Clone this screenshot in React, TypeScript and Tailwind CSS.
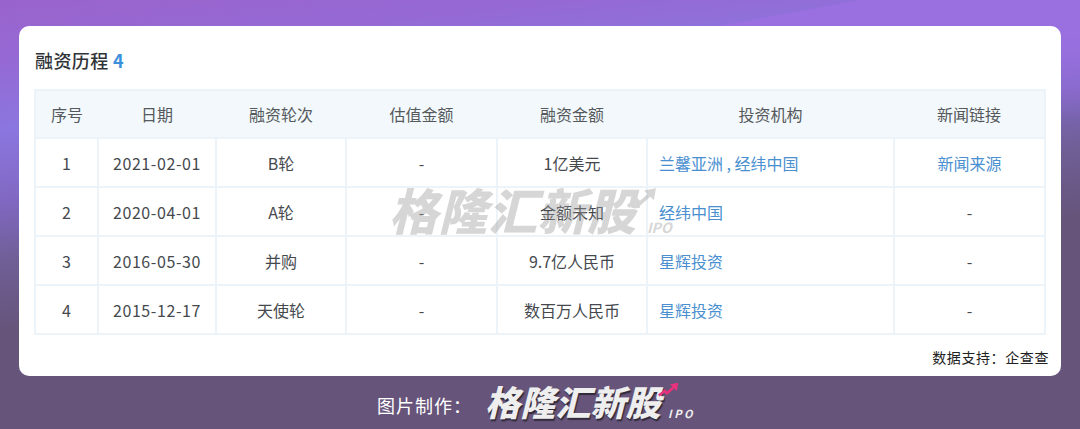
import React from "react";

const rows = [
  { id: "1", date: "2021-02-01", round: "B轮", value: "-", amount: "1亿美元", investors: "兰馨亚洲 , 经纬中国", news: "新闻来源" },
  { id: "2", date: "2020-04-01", round: "A轮", value: "-", amount: "金额未知", investors: "经纬中国", news: "-" },
  { id: "3", date: "2016-05-30", round: "并购", value: "-", amount: "9.7亿人民币", investors: "星辉投资", news: "-" },
  { id: "4", date: "2015-12-17", round: "天使轮", value: "-", amount: "数百万人民币", investors: "星辉投资", news: "-" },
];

const headers = ["序号", "日期", "融资轮次", "估值金额", "融资金额", "投资机构", "新闻链接"];
const widths = ["w-[63px]", "w-[118px]", "w-[130px]", "w-[151px]", "w-[150px]", "w-[247px]", "w-[151px]"];

function Arrow({ className }: { className: string }) {
  return (
    <svg viewBox="0 0 28 20" className={className}>
      <path d="M1 18 L9 12 L12 15 L21 7" fill="none" stroke="currentColor" strokeWidth="3.5" />
      <path d="M16 3 L27 1 L25 12 Z" fill="currentColor" />
    </svg>
  );
}

export default function App() {
  return (
    <div className="relative h-[429px] w-[1080px] overflow-hidden bg-[linear-gradient(174deg,#9a63cc_0px,#9569d4_60px,#8b76df_130px,#8068c2_200px,#6f5f96_260px,#66547a_330px)] font-['Noto_Sans_CJK_SC',sans-serif]">
      {/* lighter wedge in the top right of the backdrop */}
      <svg viewBox="0 0 1080 120" className="absolute top-0 left-0 h-[120px] w-[1080px]">
        <defs>
          <linearGradient id="wedge" x1="0" y1="0" x2="0" y2="1">
            <stop offset="0" stopColor="#9a6fe0" />
            <stop offset="0.3" stopColor="#9a6fe0" />
            <stop offset="1" stopColor="#9a6fe0" stopOpacity="0" />
          </linearGradient>
        </defs>
        <polygon points="600,48 860,0 1080,0 1080,120 600,120" fill="url(#wedge)" />
      </svg>

      <div className="relative px-[19px] pt-[26px]">
        <div className="relative h-[350px] rounded-[10px] bg-white px-4 pt-[19px]">
          <h2 className="h-[44px] text-[18px] leading-[30px] font-medium tracking-[0.4px] text-[#2f3338]">
            融资历程 <span className="font-bold text-[#3c8fdc]">4</span>
          </h2>

          <table className="-ml-px w-[1010px] table-fixed border-collapse text-[16px] text-[#45494e]">
            <thead>
              <tr className="h-[48px] bg-[#f2f8fb]">
                {headers.map((h, i) => (
                  <th key={h} className={`${widths[i]} border-y-2 border-[#ecf4f9] font-normal text-[#55585c] first:border-l-2 last:border-r-2`}>
                    {h}
                  </th>
                ))}
              </tr>
            </thead>
            <tbody>
              {rows.map((r) => (
                <tr key={r.id} className="h-[49px] text-center">
                  <td className="border-2 border-[#ecf4f9]">{r.id}</td>
                  <td className="border-2 border-[#ecf4f9] tracking-[0.6px]">{r.date}</td>
                  <td className="border-2 border-[#ecf4f9]">{r.round}</td>
                  <td className="border-2 border-[#ecf4f9]">{r.value}</td>
                  <td className="border-2 border-[#ecf4f9]">{r.amount}</td>
                  <td className="border-2 border-[#ecf4f9] pl-[11px] text-left text-[#4a90d0]">{r.investors}</td>
                  <td className={`border-2 border-[#ecf4f9] ${r.news === "-" ? "" : "text-[#4a90d0]"}`}>{r.news}</td>
                </tr>
              ))}
            </tbody>
          </table>

          <p className="-mr-1 mt-[12px] text-right text-[14px] leading-5 tracking-[0.6px] text-[#222222]">{"数据支持\uFF1A企查查"}</p>

          {/* watermark */}
          <div className="absolute top-[153px] left-[370px] flex items-start text-[#9a9a9a] opacity-40">
            <span className="text-[49px] leading-[60px] font-black italic tracking-[0.5px]">格隆汇新股</span>
            <Arrow className="mt-[8px] -ml-[10px] h-[22px] w-[30px]" />
            <span className="absolute top-[40px] left-[258px] text-[14px] leading-4 font-bold italic">IPO</span>
          </div>
        </div>
      </div>

      <div className="relative flex h-[53px] items-center pl-[377px] text-white">
        <span className="mt-[6px] text-[18px] tracking-[1px]">{"图片制作\uFF1A"}</span>
        <div className="relative -mt-[4px] ml-[13px] flex h-[40px] w-[210px] items-center">
          <span className="text-[35px] leading-10 font-black tracking-[0.2px] text-[#eeeeee] italic [text-shadow:1px_2px_1px_#2f2a3a]">格隆汇新股</span>
          <Arrow className="absolute top-[1px] left-[173px] h-[15px] w-[21px] text-[#e8327c]" />
          <span className="absolute top-[24px] left-[183px] text-[11px] leading-4 font-bold italic tracking-[2.5px] text-[#eeeeee]">IPO</span>
        </div>
      </div>
    </div>
  );
}
